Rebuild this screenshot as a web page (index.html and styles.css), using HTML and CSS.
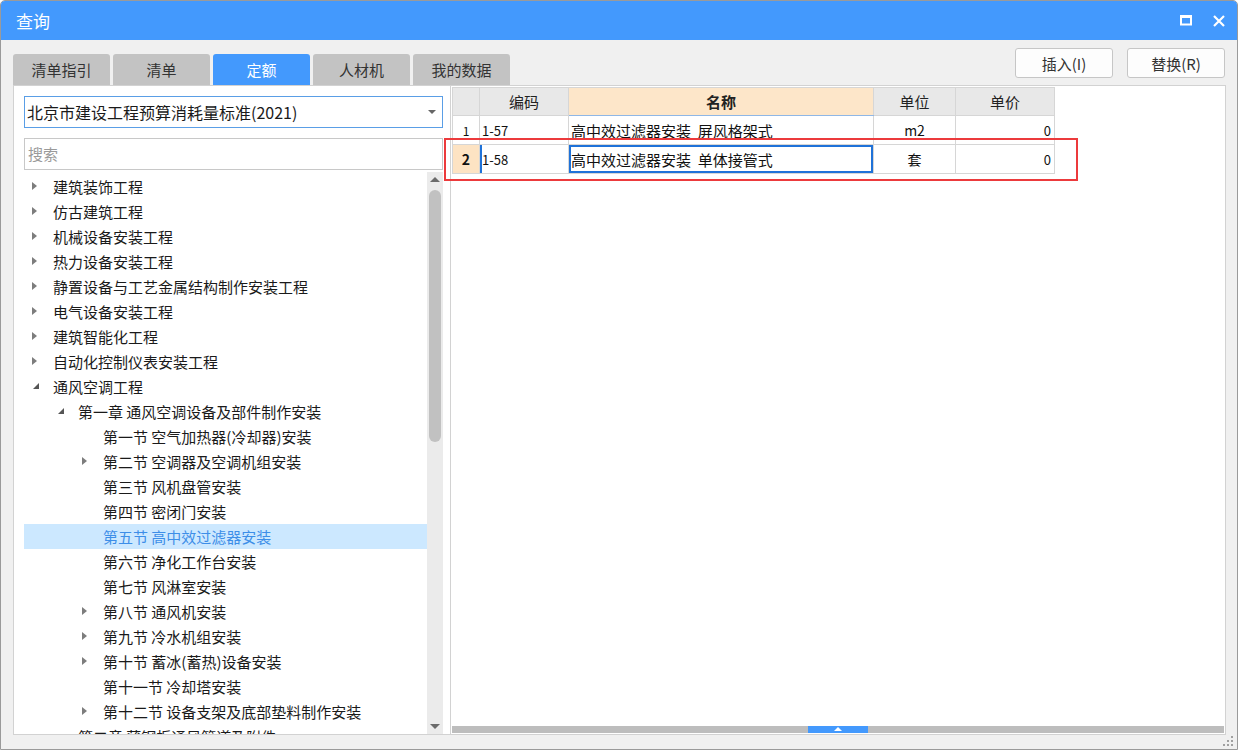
FILE: index.html
```html
<!DOCTYPE html>
<html lang="zh-CN">
<head>
    <meta charset="UTF-8">
    <title>查询</title>
    <link rel="stylesheet" href="styles.css">
</head>
<body>
<div class="window">
    <div class="titlebar">
        <span class="title">查询</span>
        <div class="controls">
            <svg width="12" height="11" viewBox="0 0 12 11"><rect x="1" y="1.5" width="10" height="8" fill="none" stroke="#fff" stroke-width="2"/><rect x="0" y="0" width="12" height="3" fill="#fff"/></svg>
            <svg width="12" height="12" viewBox="0 0 12 12"><path d="M1 1 L11 11 M11 1 L1 11" stroke="#fff" stroke-width="2.2"/></svg>
        </div>
    </div>

    <div class="content">
        <div class="toolbar">
            <div class="tabs">
                <div class="tab">清单指引</div>
                <div class="tab">清单</div>
                <div class="tab active">定额</div>
                <div class="tab">人材机</div>
                <div class="tab">我的数据</div>
            </div>
            <div class="actions">
                <button>插入(I)</button>
                <button>替换(R)</button>
            </div>
        </div>

        <div class="panes">
            <div class="left-pane">
                <div class="select">北京市建设工程预算消耗量标准(2021)<span class="caret"></span></div>
                <div class="search">搜索</div>
                <div class="tree-wrap">
                    <ul class="tree">
                        <li class="l0"><i class="arrow"></i>建筑装饰工程</li>
                        <li class="l0"><i class="arrow"></i>仿古建筑工程</li>
                        <li class="l0"><i class="arrow"></i>机械设备安装工程</li>
                        <li class="l0"><i class="arrow"></i>热力设备安装工程</li>
                        <li class="l0"><i class="arrow"></i>静置设备与工艺金属结构制作安装工程</li>
                        <li class="l0"><i class="arrow"></i>电气设备安装工程</li>
                        <li class="l0"><i class="arrow"></i>建筑智能化工程</li>
                        <li class="l0"><i class="arrow"></i>自动化控制仪表安装工程</li>
                        <li class="l0"><i class="arrow open"></i>通风空调工程</li>
                        <li class="l1"><i class="arrow open"></i>第一章 通风空调设备及部件制作安装</li>
                        <li class="l2"><i class="arrow none"></i>第一节 空气加热器(冷却器)安装</li>
                        <li class="l2"><i class="arrow"></i>第二节 空调器及空调机组安装</li>
                        <li class="l2"><i class="arrow none"></i>第三节 风机盘管安装</li>
                        <li class="l2"><i class="arrow none"></i>第四节 密闭门安装</li>
                        <li class="l2 selected"><i class="arrow none"></i>第五节 高中效过滤器安装</li>
                        <li class="l2"><i class="arrow none"></i>第六节 净化工作台安装</li>
                        <li class="l2"><i class="arrow none"></i>第七节 风淋室安装</li>
                        <li class="l2"><i class="arrow"></i>第八节 通风机安装</li>
                        <li class="l2"><i class="arrow"></i>第九节 冷水机组安装</li>
                        <li class="l2"><i class="arrow"></i>第十节 蓄冰(蓄热)设备安装</li>
                        <li class="l2"><i class="arrow none"></i>第十一节 冷却塔安装</li>
                        <li class="l2"><i class="arrow"></i>第十二节 设备支架及底部垫料制作安装</li>
                        <li class="l1"><i class="arrow none"></i>第二章 薄钢板通风管道及附件</li>
                    </ul>
                    <div class="vscroll">
                        <span class="up"></span>
                        <div class="thumb"></div>
                        <span class="down"></span>
                    </div>
                </div>
            </div>

            <div class="right-pane">
                <table class="grid">
                    <thead>
                        <tr>
                            <th class="rn"></th>
                            <th class="code">编码</th>
                            <th class="name">名称</th>
                            <th class="unit">单位</th>
                            <th class="price">单价</th>
                        </tr>
                    </thead>
                    <tbody>
                        <tr>
                            <td class="rn">1</td>
                            <td class="code">1-57</td>
                            <td class="name">高中效过滤器安装&nbsp;&nbsp;屏风格架式</td>
                            <td class="unit">m2</td>
                            <td class="price">0</td>
                        </tr>
                        <tr class="current">
                            <td class="rn">2</td>
                            <td class="code">1-58</td>
                            <td class="name focus">高中效过滤器安装&nbsp;&nbsp;单体接管式</td>
                            <td class="unit">套</td>
                            <td class="price">0</td>
                        </tr>
                    </tbody>
                </table>
                <div class="filler"></div>
                <div class="hscroll"><div class="hthumb"><span></span></div></div>
            </div>
        </div>
    </div>

    <div class="grip">
        <svg width="10" height="10" viewBox="0 0 10 10" fill="#a0a0a0"><rect x="8" y="0" width="2" height="2"/><rect x="4" y="4" width="2" height="2"/><rect x="8" y="4" width="2" height="2"/><rect x="0" y="8" width="2" height="2"/><rect x="4" y="8" width="2" height="2"/><rect x="8" y="8" width="2" height="2"/></svg>
    </div>
    <div class="mark"></div>
</div>
</body>
</html>
```

FILE: styles.css
```css
* {
    box-sizing: border-box;
}
body {
    margin: 0;
    font-family: "Noto Sans CJK SC", "Noto Sans", sans-serif;
    color: #222;
    background: #fff;
}
.window {
    position: relative;
    width: 1238px;
    height: 750px;
    border: 1px solid #9a9a9a;
    border-radius: 5px 5px 0 0;
    background: #f0f0f0;
    display: flex;
    flex-direction: column;
    overflow: hidden;
}
.titlebar {
    height: 39px;
    background: #4399fd;
    display: flex;
    align-items: center;
    justify-content: space-between;
    padding: 0 12px 0 15px;
    flex-shrink: 0;
}
.title {
    color: #fff;
    font-size: 17px;
    line-height: 20px;
}
.controls {
    display: flex;
    align-items: center;
    gap: 21px;
}
.content {
    flex: 1;
    min-height: 0;
    display: flex;
    flex-direction: column;
    padding: 0 11px 14px 12px;
}
.toolbar {
    height: 45px;
    display: flex;
    justify-content: space-between;
    flex-shrink: 0;
}
.tabs {
    display: flex;
    align-items: flex-end;
    gap: 3px;
}
.tab {
    width: 97px;
    height: 31px;
    line-height: 31px;
    text-align: center;
    font-size: 15px;
    color: #333;
    background: #c3c3c3;
    border-radius: 3px 3px 0 0;
}
.tab.active {
    background: #4399fd;
    color: #fff;
}
.actions {
    display: flex;
    gap: 14px;
    padding-top: 8px;
    padding-right: 1px;
}
.actions button {
    width: 98px;
    height: 30px;
    font-family: inherit;
    font-size: 15px;
    color: #333;
    background: #fdfdfd;
    border: 1px solid #c6c6c6;
    border-radius: 3px;
    padding: 0;
}
.panes {
    flex: 1;
    min-height: 0;
    display: flex;
}
.left-pane {
    width: 438px;
    min-height: 0;
    background: #fff;
    border: 1px solid #d2d2d2;
    padding: 10px 7px 0 10px;
    display: flex;
    flex-direction: column;
}
.select {
    position: relative;
    height: 32px;
    flex-shrink: 0;
    border: 1px solid #5a9ee6;
    font-size: 16px;
    line-height: 30px;
    padding-left: 2px;
    color: #1a1a1a;
    white-space: nowrap;
}
.caret {
    position: absolute;
    right: 6px;
    top: 13px;
    border-top: 4px solid #666;
    border-left: 4px solid transparent;
    border-right: 4px solid transparent;
}
.search {
    height: 32px;
    flex-shrink: 0;
    margin-top: 10px;
    border: 1px solid #c8c8c8;
    font-size: 15px;
    line-height: 30px;
    padding-left: 3px;
    color: #9a9a9a;
}
.tree-wrap {
    flex: 1;
    min-height: 0;
    display: flex;
    margin-top: 2px;
    overflow: hidden;
}
.tree {
    flex: 1;
    list-style: none;
    margin: 0;
    padding: 2px 0 0;
    overflow: hidden;
}
.tree li {
    height: 25px;
    line-height: 25px;
    font-size: 15px;
    color: #1a1a1a;
    white-space: nowrap;
    display: flex;
    align-items: center;
}
.tree li.l0 { padding-left: 4px; }
.tree li.l1 { padding-left: 29px; }
.tree li.l2 { padding-left: 54px; }
.tree li.selected {
    background: #cce8ff;
    color: #3d8ee8;
}
.arrow {
    width: 25px;
    height: 25px;
    position: relative;
    flex-shrink: 0;
}
.arrow::before {
    content: "";
    position: absolute;
    left: 4px;
    top: 8px;
    border-left: 5px solid #7d7d7d;
    border-top: 4px solid transparent;
    border-bottom: 4px solid transparent;
}
.arrow.open::before {
    left: 5px;
    top: 9px;
    border-left: 0;
    border-right: 6px solid #555;
    border-top: 6px solid transparent;
    border-bottom: 0;
}
.arrow.none::before {
    display: none;
}
.vscroll {
    width: 16px;
    background: #ebebeb;
    display: flex;
    flex-direction: column;
    align-items: center;
    flex-shrink: 0;
}
.vscroll .up {
    margin-top: 5px;
    border-bottom: 5px solid #6b6b6b;
    border-left: 5px solid transparent;
    border-right: 5px solid transparent;
}
.vscroll .thumb {
    width: 12px;
    height: 252px;
    margin-top: 8px;
    background: #c1c1c1;
    border-radius: 6px;
}
.vscroll .down {
    margin-top: auto;
    margin-bottom: 5px;
    border-top: 5px solid #6b6b6b;
    border-left: 5px solid transparent;
    border-right: 5px solid transparent;
}
.right-pane {
    flex: 1;
    background: #fff;
    border: 1px solid #d2d2d2;
    border-left: 0;
    display: flex;
    flex-direction: column;
    padding: 1px 1px 0 1px;
}
.grid {
    border-collapse: collapse;
    table-layout: fixed;
    width: 602px;
    font-size: 15px;
}
.grid th,
.grid td {
    border: 1px solid #d6d6d6;
    padding: 0 3px;
    white-space: nowrap;
    overflow: hidden;
}
.grid th {
    height: 28px;
    background: #e8e8e8;
    font-weight: normal;
    color: #222;
    text-align: center;
}
.grid th.name {
    background: #fde6c9;
    font-weight: bold;
    border-bottom: 1px solid #8fb7e6;
}
.grid td {
    height: 29px;
    color: #111;
}
.grid .rn { width: 27px; text-align: center; }
.grid .code { width: 89px; }
.grid .name { width: 305px; }
.grid .unit { width: 82px; text-align: center; }
.grid .price { width: 99px; }
.grid td.price { text-align: right; }
.grid td.rn {
    font-size: 12px;
    padding: 0;
    vertical-align: bottom;
    padding-bottom: 5px;
}
.grid td.code {
    font-size: 13px;
    padding-left: 2px;
}
.grid td.name {
    padding-left: 2px;
}
.grid td.unit {
    font-size: 14px;
}
.grid td.price {
    font-size: 13px;
}
.grid tr.current td.rn {
    background: #fde3c3;
    font-weight: bold;
    font-size: 14px;
    vertical-align: middle;
    padding-bottom: 0;
}
.grid tr.current td.code {
    box-shadow: inset 2px 0 0 #1f72d8;
}
.grid td.focus {
    box-shadow: inset 0 0 0 2px #1f72d8;
}
.filler {
    flex: 1;
}
.hscroll {
    height: 7px;
    margin: 0 0 1px 0;
    background: #bdbdbd;
    position: relative;
    flex-shrink: 0;
}
.hthumb {
    position: absolute;
    left: 356px;
    top: 0;
    width: 60px;
    height: 7px;
    background: #4399fd;
}
.hthumb span {
    position: absolute;
    left: 26px;
    top: 1px;
    border-bottom: 4px solid #fff;
    border-left: 4px solid transparent;
    border-right: 4px solid transparent;
}
.grip {
    position: absolute;
    right: 4px;
    bottom: 3px;
    line-height: 0;
}
.mark {
    position: absolute;
    left: 443px;
    top: 137px;
    width: 634px;
    height: 43px;
    border: 2px solid #ec3a3c;
}
```
